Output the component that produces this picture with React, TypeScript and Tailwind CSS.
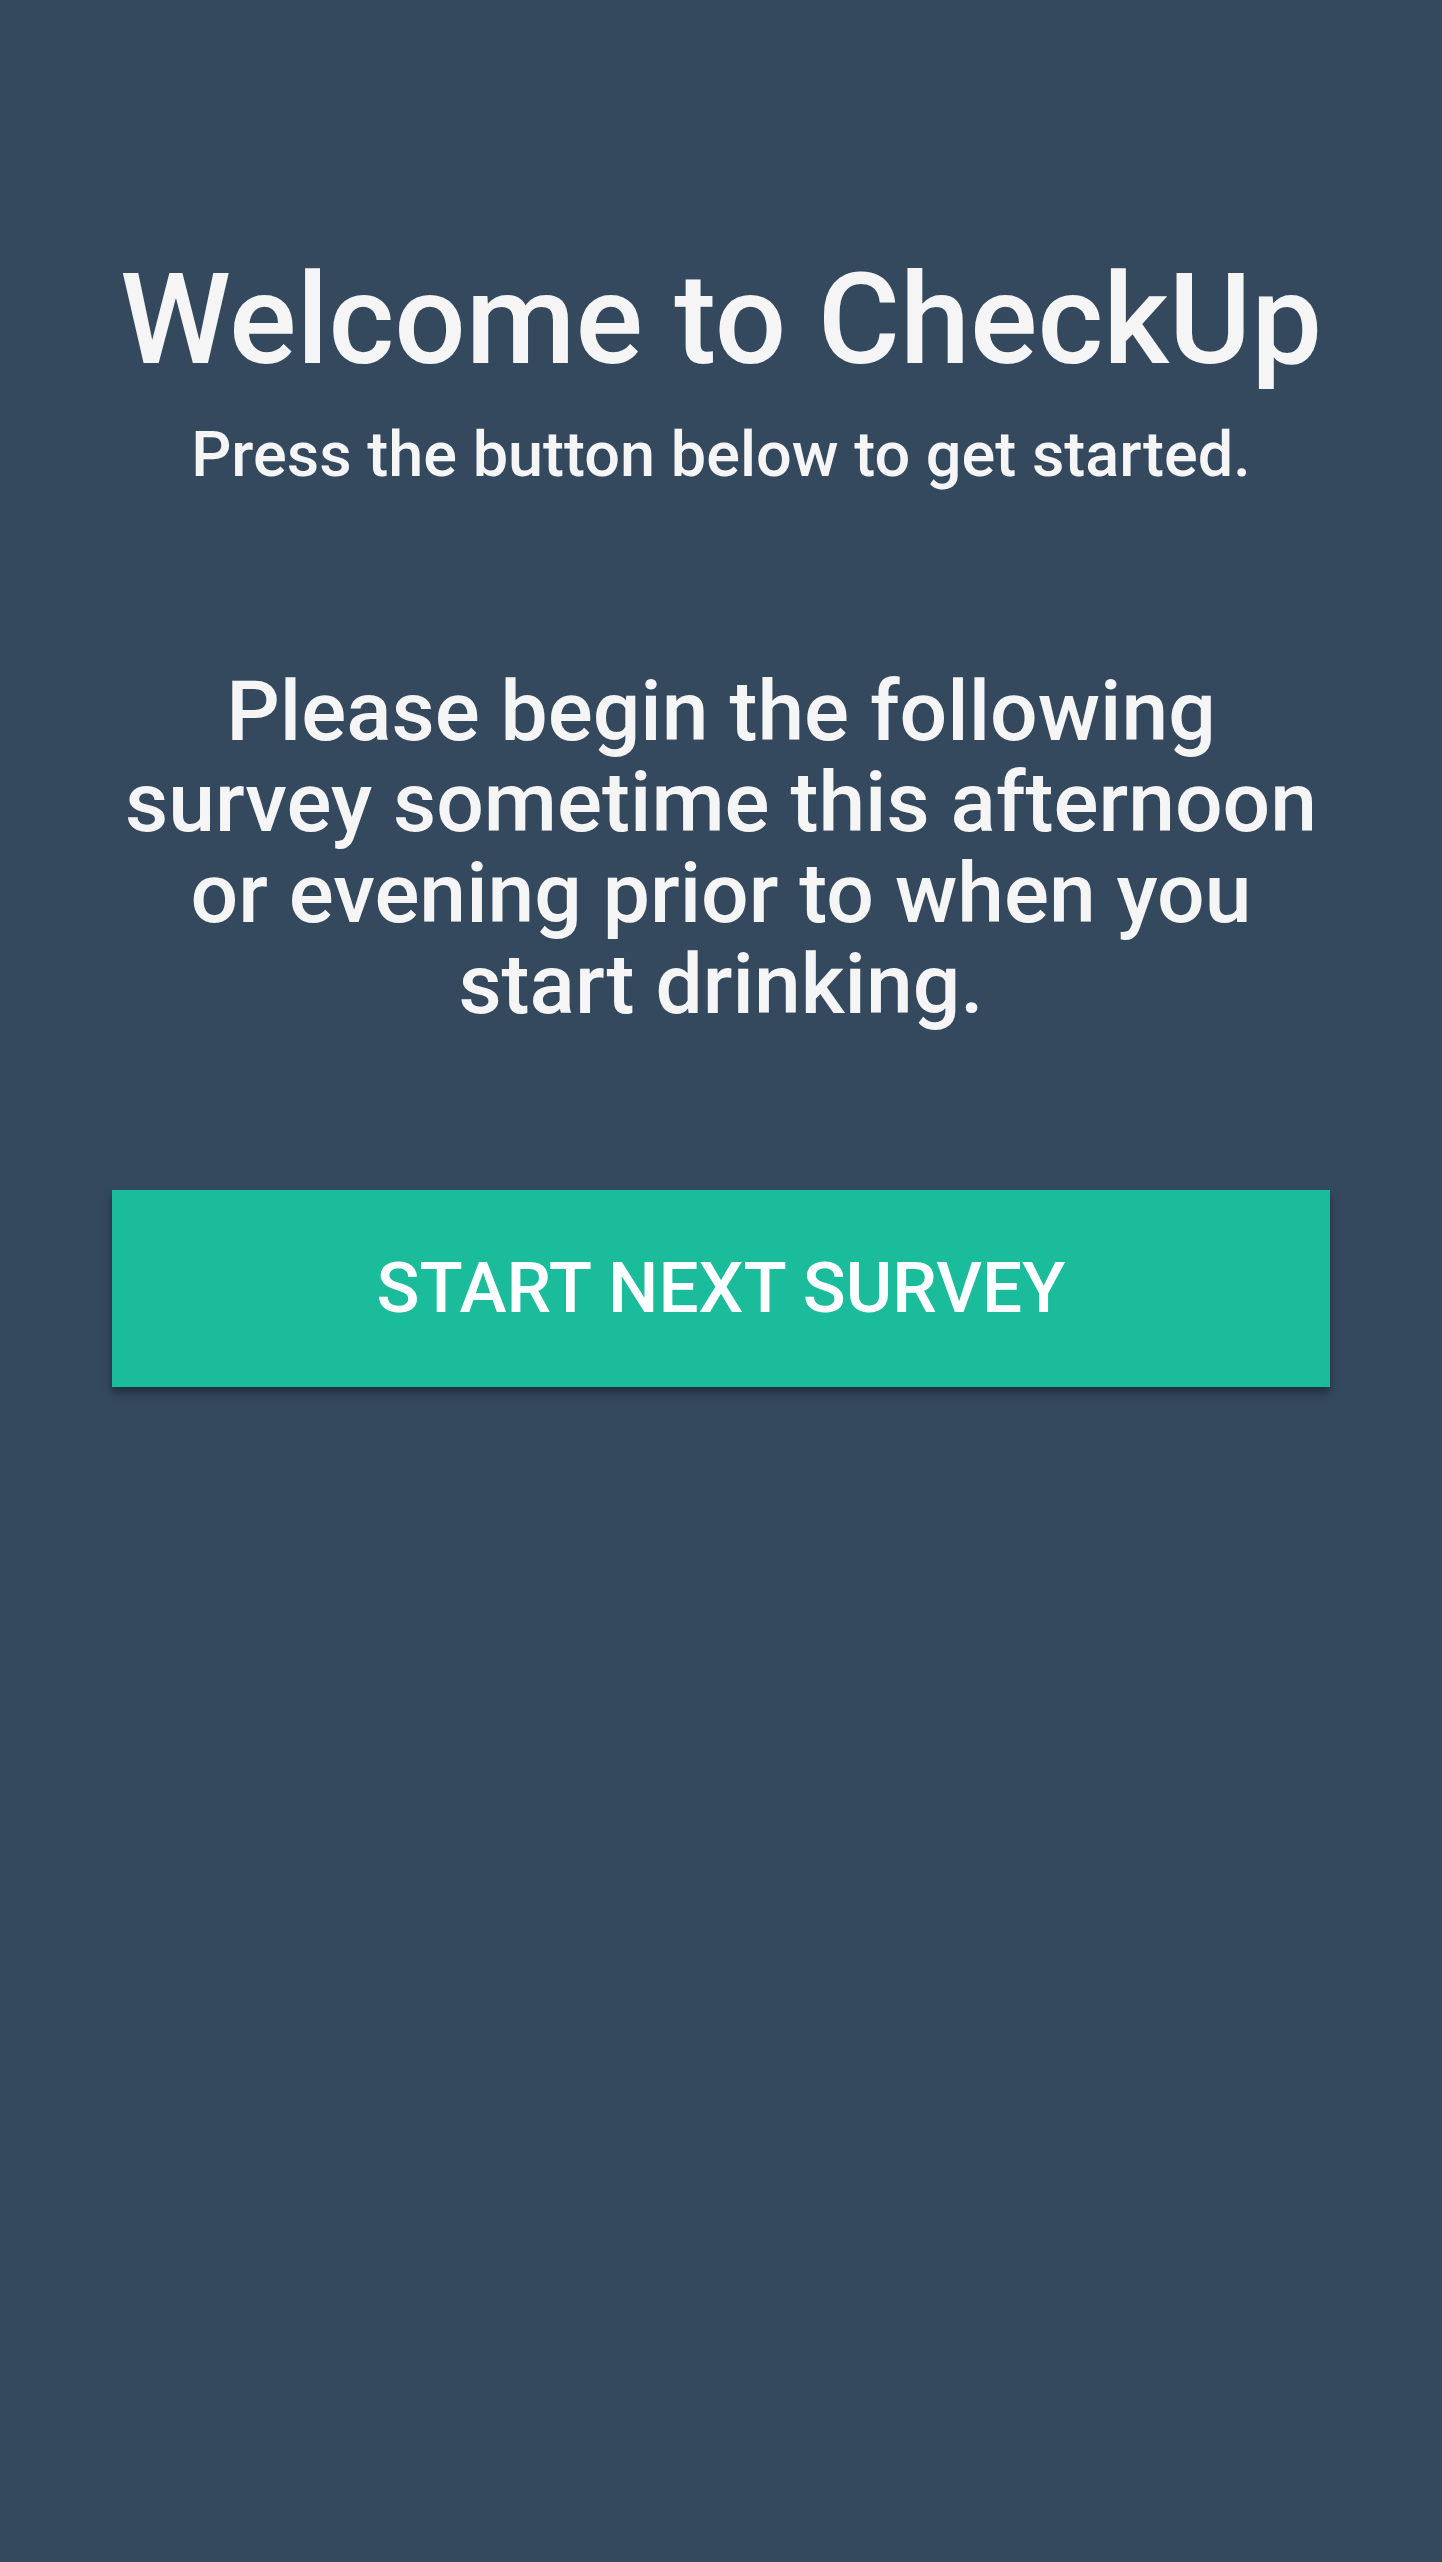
export default function App() {
  return (
    <div
      className="min-h-[2562px] w-full bg-[#34495e] px-[112px] pt-[246px] text-[#f5f5f5]"
      style={{ fontFamily: "Roboto, 'Liberation Sans', sans-serif" }}
    >
      {/* Header */}
      <h1 className="text-center text-[126px] font-medium leading-[148px]">
        Welcome to CheckUp
      </h1>
      <p className="mt-[24px] text-center text-[63px] font-medium leading-[74px]">
        Press the button below to get started.
      </p>

      {/* Instructions */}
      <p className="mt-[174px] text-center text-[84px] font-medium leading-[91px]">
        Please begin the following survey sometime this afternoon or evening
        prior to when you start drinking.
      </p>

      {/* Action */}
      <button className="mt-[160px] flex h-[197px] w-full items-center justify-center bg-[#1abc9c] text-[71px] font-medium uppercase text-white shadow-[0_6px_8px_rgba(0,0,0,0.35)]">
        Start next survey
      </button>
    </div>
  );
}
